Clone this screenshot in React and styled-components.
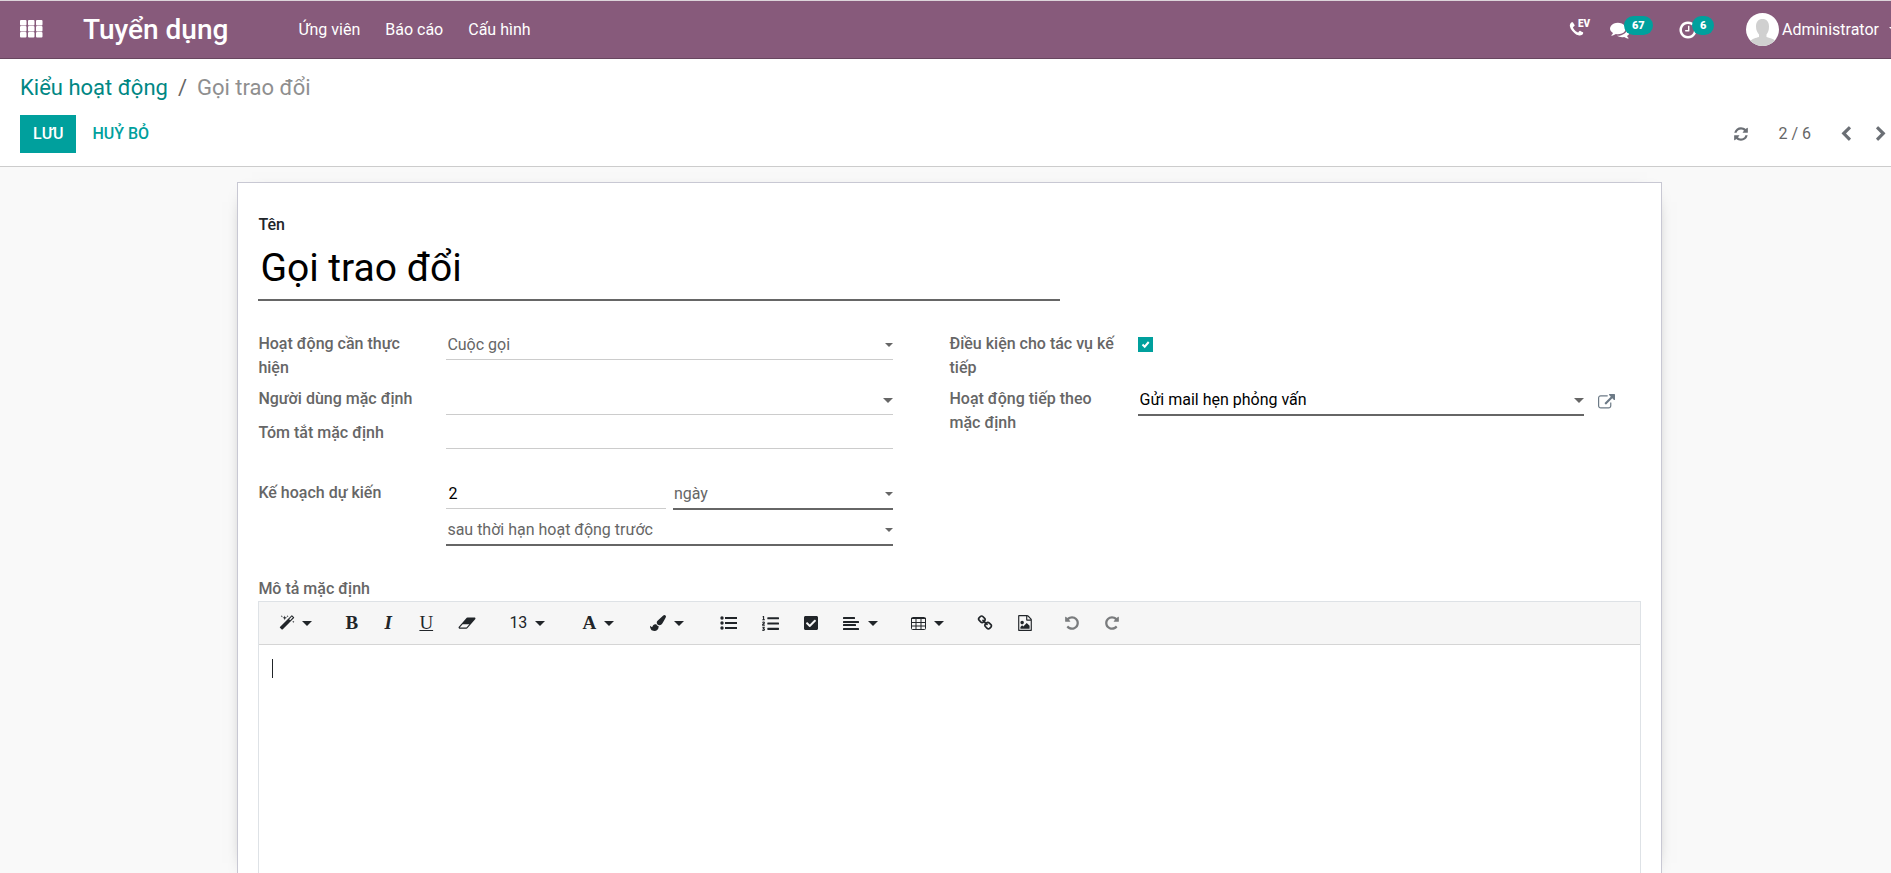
import React from "react";
import styled, { createGlobalStyle } from "styled-components";
import { FaCheckSquare, FaListOl } from "react-icons/fa";

const GlobalStyle = createGlobalStyle`
  :root {
    --brand: #875a7b;
    --primary: #00a09d;
    --link: #008784;
    --text: #666666;
    --dark: #212529;
    --line: #cccccc;
  }

  * {
    box-sizing: border-box;
  }

  body {
    margin: 0;
    overflow: hidden;
    background-color: #f9f9f9;
  }

  body,
  button,
  input,
  select,
  textarea {
    font-family: Roboto, "Noto Sans", sans-serif;
    font-size: 16px;
    line-height: 24px;
    color: var(--text);
  }

  button {
    padding: 0;
    border: none;
    background: none;
  }
`;

const Page = styled.div`
  display: flex;
  flex-direction: column;
  width: calc(100% + 8px);
  height: 100vh;
`;

const Navbar = styled.header`
  display: flex;
  align-items: center;
  height: 59px;
  padding-left: 20px;
  color: white;
  background-color: var(--brand);
  border-top: 1px solid #dcd4da;
  border-bottom: 1px solid #68465f;
`;

const AppsButton = styled.button`
  display: flex;
  margin-right: 40px;
  color: white;
`;

const Brand = styled.a`
  margin-right: 70px;
  font-size: 28px;
  font-weight: 500;
  line-height: 40px;
  color: white;
  text-decoration: none;
`;

const Menu = styled.nav`
  display: flex;
  flex: 1;
  gap: 25px;

  a {
    color: white;
    text-decoration: none;
  }
`;

const Systray = styled.div`
  display: flex;
  align-items: center;
`;

const SystrayButton = styled.button`
  position: relative;
  display: flex;
  align-items: center;
  width: ${(props) => props.$width}px;
  height: 40px;
  color: white;

  sup {
    align-self: flex-start;
    margin-left: -7px;
    font-size: 10px;
    font-weight: 900;
    line-height: 28px;
  }
`;

const Badge = styled.span`
  position: absolute;
  top: 6px;
  left: 14px;
  padding: 0 8px;
  border-radius: 10px;
  font-size: 11px;
  font-weight: 900;
  line-height: 19px;
  background-color: var(--primary);
`;

const UserButton = styled.button`
  display: flex;
  align-items: center;
  gap: 3px;
  color: white;
`;

const Caret = styled.span`
  width: 0;
  height: 0;
  margin-left: ${(props) => props.$space || 0}px;
  border: ${(props) => props.$size || 5}px solid transparent;
  border-top-color: currentColor;
  border-bottom: none;
`;

const ControlPanel = styled.div`
  display: flex;
  flex-direction: column;
  gap: 11px;
  padding: 13px 10px 13px 20px;
  background-color: white;
  border-bottom: 1px solid var(--line);
`;

const Breadcrumb = styled.nav`
  display: flex;
  gap: 10px;
  font-size: 22px;
  line-height: 32px;

  a {
    color: var(--link);
    text-decoration: none;
  }

  .active {
    color: #8f8f8f;
  }
`;

const Actions = styled.div`
  display: flex;
  align-items: center;
`;

const ActionButton = styled.button`
  height: 38px;
  padding: 0 13px;
  margin-right: 3px;
  font-weight: 500;
  text-transform: uppercase;
  color: ${(props) => (props.$primary ? "white" : "var(--primary)")};
  background-color: ${(props) => (props.$primary ? "var(--primary)" : "white")};
`;

const Pager = styled.div`
  display: flex;
  align-items: center;
  margin-left: auto;

  button {
    display: flex;
    color: #6b6f75;
  }

  span {
    margin: 0 27px 0 29px;
  }

  button + button {
    margin-left: 19px;
  }
`;

const Content = styled.main`
  display: flex;
  flex: 1;
  min-height: 0;
  padding-top: 15px;
  background-color: #f9f9f9;
`;

const Sheet = styled.form`
  display: flex;
  flex-direction: column;
  width: 75%;
  margin: 0 auto;
  padding: 30px 20px 0;
  background-color: white;
  border: 1px solid #c8c8d3;
  border-bottom: none;
  box-shadow: 0 5px 20px -15px black;
`;

const TitleLabel = styled.label`
  font-weight: 500;
  color: var(--dark);
`;

const TitleInput = styled.input`
  width: 58%;
  height: 64px;
  padding: 0 2px;
  border: none;
  border-bottom: 2px solid var(--text);
  outline: none;
  font-size: 39px;
  line-height: 48px;
  color: black;
`;

const Group = styled.div`
  display: grid;
  grid-template-columns: 1fr 1fr;
  margin-top: ${(props) => props.$top}px;
`;

const Column = styled.div`
  display: grid;
  grid-template-columns: 188px 1fr 57px;
  align-content: start;
  row-gap: ${(props) => props.$gap || 5}px;
`;

const Label = styled.label`
  grid-column: 1;
  padding: 1px 14px 1px 0;
  font-weight: 500;
`;

const Field = styled.div`
  grid-column: 2;
  display: flex;
  gap: 7px;
`;

const Control = styled.span`
  display: flex;
  flex: 1;
  align-items: center;
  align-self: flex-start;
  min-width: 0;
  height: ${(props) => (props.$required ? 30 : 29)}px;
  border-bottom: ${(props) =>
    props.$required ? "2px solid var(--text)" : "1px solid var(--line)"};

  input,
  select {
    flex: 1;
    min-width: 0;
    padding: 0 2px;
    border: none;
    outline: none;
    appearance: none;
    background: none;
  }

  select {
    padding: 0 1px;
  }

  input {
    color: black;
  }
`;

const CheckboxWrapper = styled.span`
  position: relative;
  display: flex;
  width: 15px;
  height: 15px;
  margin-top: 6px;

  input {
    width: 15px;
    height: 15px;
    margin: 0;
    appearance: none;
    background-color: var(--primary);
  }

  svg {
    position: absolute;
    top: 3px;
    left: 3px;
    pointer-events: none;
  }
`;

const ExternalButton = styled.button`
  display: flex;
  align-self: start;
  margin: 8px 0 0 14px;
  color: #6c7a86;
`;

const EditorLabel = styled.label`
  margin-top: 31px;
  font-weight: 500;
`;

const Editor = styled.div`
  display: flex;
  flex: 1;
  flex-direction: column;
  border: 1px solid #dee2e6;
  border-bottom: none;
`;

const Toolbar = styled.div`
  display: flex;
  align-items: center;
  height: 43px;
  padding-left: 20px;
  background-color: #f6f6f6;
  border-bottom: 1px solid #d5d5d5;
`;

const Tool = styled.button`
  display: flex;
  align-items: center;
  justify-content: flex-start;
  width: ${(props) => props.$width}px;
  height: 24px;
  color: ${(props) => (props.$muted ? "#7a7c7e" : "var(--dark)")};

  b,
  i,
  u {
    font-family: "Liberation Serif", serif;
    font-size: 19px;
    font-weight: 700;
  }

  u {
    font-weight: 400;
  }
`;

const EditorBody = styled.div`
  display: flex;
  flex: 1;
  padding: 14px 13px;

  textarea {
    flex: 1;
    padding: 0;
    border: none;
    outline: none;
    resize: none;
  }
`;

const Cursor = styled.span`
  width: 1px;
  height: 19px;
  background-color: var(--dark);
`;

const ICONS = {
  phone:
    "M1600 1240q0 27-10 70.500t-21 68.500q-21 50-122 106-94 51-186 51-27 0-53-3.500t-57.500-12.500-47-14.500-55.500-20.500-49-18q-98-35-175-83-127-79-264-216t-216-264q-48-77-83-175-3-9-18-49t-20.500-55.500-14.500-47-12.500-57.500-3.500-53q0-92 51-186 56-101 106-122 25-11 68.500-21t70.500-10q14 0 21 3 18 6 53 76 11 19 30 54t35 63.500 31 53.500q3 4 17.500 25t21.500 35.500 7 28.500q0 20-28.500 50t-62 55-62 53-28.500 46q0 9 5 22.500t8.500 20.500 14 24 11.500 19q76 137 174 235t235 174q2 1 19 11.500t24 14 20.500 8.500 22.500 5q18 0 46-28.500t53-62 55-62 50-28.500q14 0 28.500 7t35.500 21.500 25 17.500q25 15 53.500 31t63.500 35 54 30q70 35 76 53 3 7 3 21z",
  comments:
    "M1408 768q0 139-94 257t-256.500 186.500-353.500 68.500q-86 0-176-16-124 88-278 128-36 9-86 16h-3q-11 0-20.500-8t-11.500-21q-1-3-1-6.500t.5-6.500 2-6l2.500-5 3.500-5.500 4-5 4.500-5 4-4.500q5-6 23-25t26-29.500 22.500-29 25-38.500 20.500-44q-124-72-195-177t-71-224q0-139 94-257t256.500-186.500 353.500-68.500 353.500 68.500 256.500 186.500 94 257zm384 256q0 120-71 224.500t-195 176.500q10 24 20.500 44t25 38.500 22.500 29 26 29.500 23 25q1 1 4 4.500t4.500 5 4 5 3.500 5.500l2.500 5 2 6 .5 6.500-1 6.500q-3 14-13 22t-22 7q-50-7-86-16-154-40-278-128-90 16-176 16-271 0-472-132 58 4 88 4 161 0 309-45t264-129q125-92 192-212t67-254q0-77-23-152 129 71 204 178t75 230z",
  clock:
    "M1024 544v448q0 14-9 23t-23 9h-320q-14 0-23-9t-9-23v-64q0-14 9-23t23-9h224v-352q0-14 9-23t23-9h64q14 0 23 9t9 23zm416 352q0-148-73-273t-198-198-273-73-273 73-198 198-73 273 73 273 198 198 273 73 273-73 198-198 73-273zm224 0q0 209-103 385.500t-279.500 279.500-385.500 103-385.500-103-279.500-279.500-103-385.500 103-385.500 279.500-279.500 385.500-103 385.500 103 279.500 279.500 103 385.500z",
  refresh:
    "M1639 1056q0 5-1 7-64 268-268 434.500t-478 166.500q-146 0-282.500-55t-243.500-157l-129 129q-19 19-45 19t-45-19-19-45v-448q0-26 19-45t45-19h448q26 0 45 19t19 45-19 45l-137 137q71 66 161 102t187 36q134 0 250-65t186-179q11-17 53-117 8-23 30-23h192q13 0 22.500 9.500t9.500 22.500zm25-800v448q0 26-19 45t-45 19h-448q-26 0-45-19t-19-45 19-45l138-138q-148-137-349-137-134 0-250 65t-186 179q-11 17-53 117-8 23-30 23h-199q-13 0-22.500-9.500t-9.500-22.500v-7q65-268 270-434.500t480-166.500q146 0 284 55.500t245 156.500l130-129q19-19 45-19t45 19 19 45z",
  chevron:
    "M1427 301l-531 531 531 531q19 19 19 45t-19 45l-166 166q-19 19-45 19t-45-19l-742-742q-19-19-19-45t19-45l742-742q19-19 45-19t45 19l166 166q19 19 19 45t-19 45z",
  external:
    "M1408 928v320q0 119-84.500 203.500t-203.500 84.500h-832q-119 0-203.500-84.500t-84.500-203.500v-832q0-119 84.500-203.500t203.500-84.500h704q14 0 23 9t9 23v64q0 14-9 23t-23 9h-704q-66 0-113 47t-47 113v832q0 66 47 113t113 47h832q66 0 113-47t47-113v-320q0-14 9-23t23-9h64q14 0 23 9t9 23zm384-864v512q0 26-19 45t-45 19-45-19l-176-176-652 652q-10 10-23 10t-23-10l-114-114q-10-10-10-23t10-23l652-652-176-176q-19-19-19-45t19-45 45-19h512q26 0 45 19t19 45z",
  magic:
    "M1254 581l293-293-107-107-293 293zm447-293q0 27-18 45l-1286 1286q-18 18-45 18t-45-18l-198-198q-18-18-18-45t18-45l1286-1286q18-18 45-18t45 18l198 198q18 18 18 45zm-1351-190l98 30-98 30-30 98-30-98-98-30 98-30 30-98zm350 162l196 60-196 60-60 196-60-196-196-60 196-60 60-196zm930 478l98 30-98 30-30 98-30-98-98-30 98-30 30-98zm-640-640l98 30-98 30-30 98-30-98-98-30 98-30 30-98z",
  eraser:
    "M960 1408l336-384h-768l-336 384h768zm1013-1077q15 34 9.500 71.500t-30.500 65.500l-896 1024q-38 44-96 44h-768q-38 0-69.500-20.500t-47.500-54.500q-15-34-9.500-71.500t30.500-65.500l896-1024q38-44 96-44h768q38 0 69.500 20.500t47.500 54.500z",
  brush:
    "M1615 0q70 0 122.500 46.500t52.500 116.500q0 63-45 151-332 629-465 752-97 91-218 91-126 0-216.500-92.500t-90.500-219.500q0-128 92-212l638-579q59-54 130-54zm-909 1034q39 76 106.500 130t150.500 76l1 71q4 213-129.500 347t-348.500 134q-123 0-218-46.500t-152.500-127.500-86.500-183-29-220q7 5 41 30t62 44.500 59 36.500 46 17q41 0 55-37 25-66 57.500-112.500t69.500-76 88-47.500 103-25.500 125-10.500z",
  link: "M1520 1216q0-40-28-68l-208-208q-28-28-68-28-42 0-72 32 3 3 19 18.500t21.500 21.500 15 19 13 25.500 3.500 27.500q0 40-28 68t-68 28q-15 0-27.500-3.500t-25.500-13-19-15-21.500-21.500-18.500-19q-33 31-33 73 0 40 28 68l206 207q27 27 68 27 40 0 68-26l147-146q28-28 28-67zm-703-705q0-40-28-68l-206-207q-28-28-68-28-39 0-68 27l-147 146q-28 28-28 67 0 40 28 68l208 208q27 27 68 27 42 0 72-31-3-3-19-18.500t-21.500-21.500-15-19-13-25.500-3.500-27.500q0-40 28-68t68-28q15 0 27.500 3.500t25.500 13 19 15 21.500 21.500 18.500 19q33-31 33-73zm895 705q0 120-85 203l-147 146q-83 83-203 83-121 0-204-85l-206-207q-83-83-83-203 0-123 88-209l-88-88q-86 88-208 88-120 0-204-84l-208-208q-84-84-84-204t85-203l147-146q83-83 203-83 121 0 204 85l206 207q83 83 83 203 0 123-88 209l88 88q86-88 208-88 120 0 204 84l208 208q84 84 84 204z",
  image:
    "M1596 380q28 28 48 76t20 88v1152q0 40-28 68t-68 28h-1344q-40 0-68-28t-28-68v-1600q0-40 28-68t68-28h896q40 0 88 20t76 48zm-444-244v376h376q-10-29-22-41l-313-313q-12-12-41-22zm384 1528v-1024h-416q-40 0-68-28t-28-68v-416h-768v1536h1280zm-128-448v320h-1024v-192l192-192 128 128 384-384zm-832-192q-80 0-136-56t-56-136 56-136 136-56 136 56 56 136-56 136-136 56z",
  undo: "M1664 896q0 156-61 298t-164 245-245 164-298 61q-172 0-327-72.500t-264-204.500q-7-10-6.500-22.500t8.500-20.500l137-138q10-9 25-9 16 2 23 12 73 95 179 147t225 52q104 0 198.500-40.500t163.500-109.500 109.500-163.500 40.500-198.500-40.500-198.500-109.500-163.500-163.500-109.500-198.500-40.500q-98 0-188 35.500t-160 101.500l137 138q31 30 14 69-17 40-59 40h-448q-26 0-45-19t-19-45v-448q0-42 40-59 39-17 69 14l130 129q107-101 244.500-156.500t284.500-55.500q156 0 298 61t245 164 164 245 61 298z",
};

const Icon = ({ name, size = 16, wide, flip }) => (
  <svg
    width={wide ? Math.round((size * 8) / 7) : size}
    height={size}
    viewBox={wide ? "0 0 2048 1792" : "0 0 1792 1792"}
    fill="currentColor"
    aria-hidden="true"
  >
    <path
      d={ICONS[name]}
      transform={flip ? "translate(1792 0) scale(-1 1)" : undefined}
    />
  </svg>
);

const AppsIcon = () => (
  <svg width="23" height="20" viewBox="0 0 23 20" fill="currentColor">
    {[0, 6, 12].map((y) =>
      [0, 8, 16].map((x) => (
        <rect key={`${x}-${y}`} x={x} y={y} width="6.500" height="5.500" rx="1" />
      ))
    )}
  </svg>
);

const Avatar = () => (
  <svg width="33" height="33" viewBox="0 0 33 33">
    <clipPath id="avatar">
      <circle cx="16.500" cy="16.500" r="16.500" />
    </clipPath>
    <g clipPath="url(#avatar)">
      <rect width="33" height="33" fill="white" />
      <path
        d="M10 13.500c0-5 2.500-7.500 6.500-7.500s6.500 2.500 6.500 7.500c0 4-1 6-2.500 8V24c3 1 7 1.500 9 4V33H4v-4.500c2-3 6-3.500 9-4.500v-2.500c-1.500-2-3-4-3-8z"
        fill="#d0d0d0"
      />
    </g>
  </svg>
);

const ListIcon = () => (
  <svg width="17" height="14" viewBox="0 0 17 14" fill="currentColor">
    {[2, 7, 12].map((y) => (
      <g key={y}>
        <circle cx="2" cy={y} r="1.700" />
        <rect x="5" y={y - 1} width="12" height="2" />
      </g>
    ))}
  </svg>
);

const AlignIcon = () => (
  <svg width="17" height="13" viewBox="0 0 17 13" fill="currentColor">
    <rect width="12" height="2" rx="0.500" />
    <rect y="4" width="16" height="2" rx="0.500" />
    <rect y="7" width="13" height="2" rx="0.500" />
    <rect y="11" width="16" height="2" rx="0.500" />
  </svg>
);

const TableIcon = () => (
  <svg width="15" height="13" viewBox="0 0 15 13" fill="none" stroke="currentColor">
    <rect x="0.500" y="0.500" width="14" height="12" rx="1" />
    <path d="M0 1.500h15M0 5.500h15M0 9h15M5 2v11M10 2v11" />
  </svg>
);

const SelectField = ({ id, value, required, label }) => (
  <Control $required={required}>
    <select id={id} defaultValue={value} aria-label={label}>
      <option>{value}</option>
    </select>
    <Caret $size={4} />
  </Control>
);

const ComboField = ({ id, value, required }) => (
  <Control $required={required}>
    <input id={id} type="text" defaultValue={value} />
    <Caret />
  </Control>
);

const App = () => {
  return (
    <Page>
      <GlobalStyle />
      <Navbar>
        <AppsButton aria-label="Ứng dụng">
          <AppsIcon />
        </AppsButton>
        <Brand href="#">Tuyển dụng</Brand>
        <Menu>
          <a href="#">Ứng viên</a>
          <a href="#">Báo cáo</a>
          <a href="#">Cấu hình</a>
        </Menu>
        <Systray>
          <SystrayButton $width={42}>
            <Icon name="phone" size={17} />
            <sup>EV</sup>
          </SystrayButton>
          <SystrayButton $width={68}>
            <Icon name="comments" size={20} />
            <Badge>67</Badge>
          </SystrayButton>
          <SystrayButton $width={68}>
            <Icon name="clock" size={20} />
            <Badge>6</Badge>
          </SystrayButton>
          <UserButton>
            <Avatar />
            Administrator
            <Caret $space={7} />
          </UserButton>
        </Systray>
      </Navbar>

      <ControlPanel>
        <Breadcrumb>
          <a href="#">Kiểu hoạt động</a>
          <span>/</span>
          <span className="active">Gọi trao đổi</span>
        </Breadcrumb>
        <Actions>
          <ActionButton $primary>Lưu</ActionButton>
          <ActionButton>Huỷ bỏ</ActionButton>
          <Pager>
            <button aria-label="Tải lại">
              <Icon name="refresh" size={16} />
            </button>
            <span>2 / 6</span>
            <button aria-label="Trước">
              <Icon name="chevron" size={16} />
            </button>
            <button aria-label="Sau">
              <Icon name="chevron" size={16} flip />
            </button>
          </Pager>
        </Actions>
      </ControlPanel>

      <Content>
        <Sheet>
          <TitleLabel htmlFor="name">Tên</TitleLabel>
          <TitleInput id="name" type="text" defaultValue="Gọi trao đổi" />

          <Group $top={30}>
            <Column>
              <Label htmlFor="category">Hoạt động cần thực hiện</Label>
              <Field>
                <SelectField id="category" value="Cuộc gọi" />
              </Field>
              <Label htmlFor="user">Người dùng mặc định</Label>
              <Field>
                <ComboField id="user" />
              </Field>
              <Label htmlFor="summary">Tóm tắt mặc định</Label>
              <Field>
                <Control>
                  <input id="summary" type="text" />
                </Control>
              </Field>
            </Column>
            <Column>
              <Label htmlFor="force">Điều kiện cho tác vụ kế tiếp</Label>
              <Field>
                <CheckboxWrapper>
                  <input id="force" type="checkbox" defaultChecked />
                  <svg width="9" height="9" viewBox="0 0 9 9" fill="none">
                    <path d="M1.500 4.500l2.200 2.200L7.700 2" stroke="white" strokeWidth="2" />
                  </svg>
                </CheckboxWrapper>
              </Field>
              <Label htmlFor="next">Hoạt động tiếp theo mặc định</Label>
              <Field>
                <ComboField id="next" value="Gửi mail hẹn phỏng vấn" required />
              </Field>
              <ExternalButton type="button" aria-label="Mở">
                <Icon name="external" size={17} />
              </ExternalButton>
            </Column>
          </Group>

          <Group $top={31}>
            <Column $gap={6}>
              <Label htmlFor="delay">Kế hoạch dự kiến</Label>
              <Field>
                <Control>
                  <input id="delay" type="text" defaultValue="2" />
                </Control>
                <SelectField value="ngày" label="Đơn vị" required />
              </Field>
              <Field>
                <SelectField
                  value="sau thời hạn hoạt động trước"
                  label="Kiểu"
                  required
                />
              </Field>
            </Column>
          </Group>

          <EditorLabel htmlFor="note">Mô tả mặc định</EditorLabel>
          <Editor>
            <Toolbar>
              <Tool type="button" $width={66}>
                <Icon name="magic" size={16} />
                <Caret $space={7} />
              </Tool>
              <Tool type="button" $width={39}>
                <b>B</b>
              </Tool>
              <Tool type="button" $width={35}>
                <i>I</i>
              </Tool>
              <Tool type="button" $width={39}>
                <u>U</u>
              </Tool>
              <Tool type="button" $width={51}>
                <Icon name="eraser" size={16} wide />
              </Tool>
              <Tool type="button" $width={73}>
                13
                <Caret $space={8} />
              </Tool>
              <Tool type="button" $width={68}>
                <b>A</b>
                <Caret $space={8} />
              </Tool>
              <Tool type="button" $width={70}>
                <Icon name="brush" size={16} />
                <Caret $space={8} />
              </Tool>
              <Tool type="button" $width={42}>
                <ListIcon />
              </Tool>
              <Tool type="button" $width={41}>
                <FaListOl size={17} />
              </Tool>
              <Tool type="button" $width={40}>
                <FaCheckSquare size={16} />
              </Tool>
              <Tool type="button" $width={68}>
                <AlignIcon />
                <Caret $space={8} />
              </Tool>
              <Tool type="button" $width={66}>
                <TableIcon />
                <Caret $space={8} />
              </Tool>
              <Tool type="button" $width={40}>
                <Icon name="link" size={16} />
              </Tool>
              <Tool type="button" $width={47}>
                <Icon name="image" size={16} />
              </Tool>
              <Tool type="button" $width={40} $muted>
                <Icon name="undo" size={16} />
              </Tool>
              <Tool type="button" $width={40} $muted>
                <Icon name="undo" size={16} flip />
              </Tool>
            </Toolbar>
            <EditorBody>
              <Cursor />
              <textarea id="note" />
            </EditorBody>
          </Editor>
        </Sheet>
      </Content>
    </Page>
  );
};

export default App;
